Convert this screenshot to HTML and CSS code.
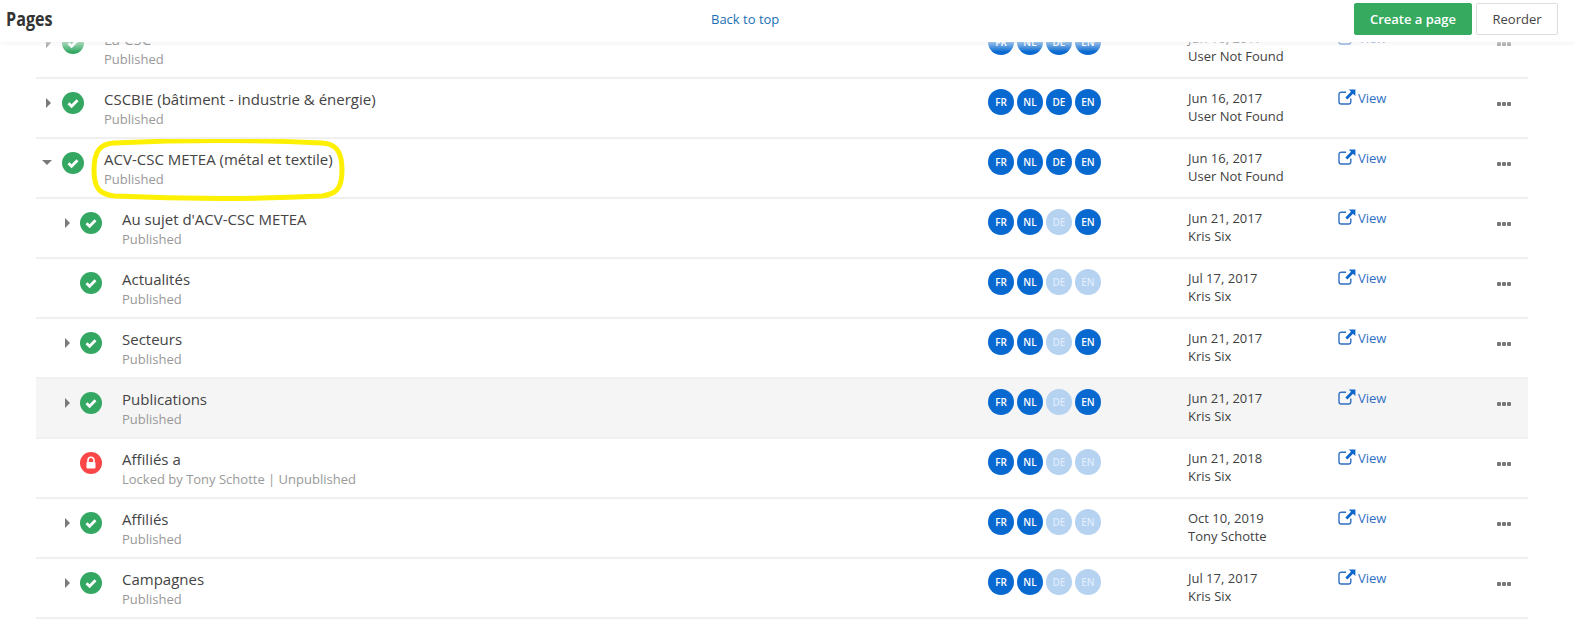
FILE: index.html
```html
<!DOCTYPE html>
<html lang="en">
<head>
<meta charset="utf-8">
<title>Pages</title>
<link rel="stylesheet" href="styles.css">
</head>
<body>
<svg class="defs" width="0" height="0" aria-hidden="true">
  <defs>
    <symbol id="ext" viewBox="0 0 18 16">
      <path d="M8 3.2H3.2A2.2 2.2 0 0 0 1 5.4v7.4A2.2 2.2 0 0 0 3.2 15h7.4a2.2 2.2 0 0 0 2.2-2.2V9.6" fill="none" stroke="#2f6fc4" stroke-width="1.4"/>
      <path d="M10.8 0.4H17.4V7L15 4.8 9.4 10.4 7.4 8.4 13 2.8Z" fill="#0e66c9"/>
    </symbol>
  </defs>
</svg>
<header class="topbar">
  <h1 class="topbar-title">Pages</h1>
  <a class="back-link">Back to top</a>
  <div class="topbar-actions">
    <button class="btn btn-primary">Create a page</button>
    <button class="btn btn-plain">Reorder</button>
  </div>
</header>
<main class="list">
  <div class="row">
    <span class="caret right"></span><span class="status ok"><svg viewBox="0 0 22 22"><path d="M6.5 11.3l3.1 3 5.9-6" fill="none" stroke="#fff" stroke-width="2.8"/></svg></span>
    <div class="name"><div class="title">La CSC</div><div class="sub">Published</div></div>
    <div class="langs"><span class="lang">FR</span><span class="lang">NL</span><span class="lang">DE</span><span class="lang">EN</span></div>
    <div class="meta"><div>Jun 16, 2017</div><div>User Not Found</div></div>
    <a class="view"><svg class="ext"><use href="#ext"/></svg>View</a>
    <div class="more"><i></i><i></i><i></i></div>
  </div>
  <div class="row">
    <span class="caret right"></span><span class="status ok"><svg viewBox="0 0 22 22"><path d="M6.5 11.3l3.1 3 5.9-6" fill="none" stroke="#fff" stroke-width="2.8"/></svg></span>
    <div class="name"><div class="title">CSCBIE (bâtiment - industrie &amp; énergie)</div><div class="sub">Published</div></div>
    <div class="langs"><span class="lang">FR</span><span class="lang">NL</span><span class="lang">DE</span><span class="lang">EN</span></div>
    <div class="meta"><div>Jun 16, 2017</div><div>User Not Found</div></div>
    <a class="view"><svg class="ext"><use href="#ext"/></svg>View</a>
    <div class="more"><i></i><i></i><i></i></div>
  </div>
  <div class="row">
    <span class="caret down"></span><span class="status ok"><svg viewBox="0 0 22 22"><path d="M6.5 11.3l3.1 3 5.9-6" fill="none" stroke="#fff" stroke-width="2.8"/></svg></span>
    <div class="name"><div class="title">ACV-CSC METEA (métal et textile)</div><div class="sub">Published</div>
      <svg class="marker" viewBox="0 0 256 62"><path d="M24 4C90 1 170 1 232 4C246 5 252 12 252 31C252 50 246 55 232 57C170 60 90 60 24 57C10 55 4 50 4 31C4 12 10 5 24 4Z" fill="none" stroke="#fdf003" stroke-width="5"/></svg>
    </div>
    <div class="langs"><span class="lang">FR</span><span class="lang">NL</span><span class="lang">DE</span><span class="lang">EN</span></div>
    <div class="meta"><div>Jun 16, 2017</div><div>User Not Found</div></div>
    <a class="view"><svg class="ext"><use href="#ext"/></svg>View</a>
    <div class="more"><i></i><i></i><i></i></div>
  </div>
  <div class="row nested">
    <span class="caret right"></span><span class="status ok"><svg viewBox="0 0 22 22"><path d="M6.5 11.3l3.1 3 5.9-6" fill="none" stroke="#fff" stroke-width="2.8"/></svg></span>
    <div class="name"><div class="title">Au sujet d'ACV-CSC METEA</div><div class="sub">Published</div></div>
    <div class="langs"><span class="lang">FR</span><span class="lang">NL</span><span class="lang off">DE</span><span class="lang">EN</span></div>
    <div class="meta"><div>Jun 21, 2017</div><div>Kris Six</div></div>
    <a class="view"><svg class="ext"><use href="#ext"/></svg>View</a>
    <div class="more"><i></i><i></i><i></i></div>
  </div>
  <div class="row nested">
    <span class="caret none"></span><span class="status ok"><svg viewBox="0 0 22 22"><path d="M6.5 11.3l3.1 3 5.9-6" fill="none" stroke="#fff" stroke-width="2.8"/></svg></span>
    <div class="name"><div class="title">Actualités</div><div class="sub">Published</div></div>
    <div class="langs"><span class="lang">FR</span><span class="lang">NL</span><span class="lang off">DE</span><span class="lang off">EN</span></div>
    <div class="meta"><div>Jul 17, 2017</div><div>Kris Six</div></div>
    <a class="view"><svg class="ext"><use href="#ext"/></svg>View</a>
    <div class="more"><i></i><i></i><i></i></div>
  </div>
  <div class="row nested">
    <span class="caret right"></span><span class="status ok"><svg viewBox="0 0 22 22"><path d="M6.5 11.3l3.1 3 5.9-6" fill="none" stroke="#fff" stroke-width="2.8"/></svg></span>
    <div class="name"><div class="title">Secteurs</div><div class="sub">Published</div></div>
    <div class="langs"><span class="lang">FR</span><span class="lang">NL</span><span class="lang off">DE</span><span class="lang">EN</span></div>
    <div class="meta"><div>Jun 21, 2017</div><div>Kris Six</div></div>
    <a class="view"><svg class="ext"><use href="#ext"/></svg>View</a>
    <div class="more"><i></i><i></i><i></i></div>
  </div>
  <div class="row nested hover">
    <span class="caret right"></span><span class="status ok"><svg viewBox="0 0 22 22"><path d="M6.5 11.3l3.1 3 5.9-6" fill="none" stroke="#fff" stroke-width="2.8"/></svg></span>
    <div class="name"><div class="title">Publications</div><div class="sub">Published</div></div>
    <div class="langs"><span class="lang">FR</span><span class="lang">NL</span><span class="lang off">DE</span><span class="lang">EN</span></div>
    <div class="meta"><div>Jun 21, 2017</div><div>Kris Six</div></div>
    <a class="view"><svg class="ext"><use href="#ext"/></svg>View</a>
    <div class="more"><i></i><i></i><i></i></div>
  </div>
  <div class="row nested">
    <span class="caret none"></span><span class="status locked"><svg viewBox="0 0 22 22"><path d="M8 10V8.2a3 3 0 0 1 6 0V10" fill="none" stroke="#fff" stroke-width="1.6"/><rect x="6.5" y="10" width="9" height="6.5" rx="1" fill="#fff"/></svg></span>
    <div class="name"><div class="title">Affiliés a</div><div class="sub">Locked by Tony Schotte | Unpublished</div></div>
    <div class="langs"><span class="lang">FR</span><span class="lang">NL</span><span class="lang off">DE</span><span class="lang off">EN</span></div>
    <div class="meta"><div>Jun 21, 2018</div><div>Kris Six</div></div>
    <a class="view"><svg class="ext"><use href="#ext"/></svg>View</a>
    <div class="more"><i></i><i></i><i></i></div>
  </div>
  <div class="row nested">
    <span class="caret right"></span><span class="status ok"><svg viewBox="0 0 22 22"><path d="M6.5 11.3l3.1 3 5.9-6" fill="none" stroke="#fff" stroke-width="2.8"/></svg></span>
    <div class="name"><div class="title">Affiliés</div><div class="sub">Published</div></div>
    <div class="langs"><span class="lang">FR</span><span class="lang">NL</span><span class="lang off">DE</span><span class="lang off">EN</span></div>
    <div class="meta"><div>Oct 10, 2019</div><div>Tony Schotte</div></div>
    <a class="view"><svg class="ext"><use href="#ext"/></svg>View</a>
    <div class="more"><i></i><i></i><i></i></div>
  </div>
  <div class="row nested">
    <span class="caret right"></span><span class="status ok"><svg viewBox="0 0 22 22"><path d="M6.5 11.3l3.1 3 5.9-6" fill="none" stroke="#fff" stroke-width="2.8"/></svg></span>
    <div class="name"><div class="title">Campagnes</div><div class="sub">Published</div></div>
    <div class="langs"><span class="lang">FR</span><span class="lang">NL</span><span class="lang off">DE</span><span class="lang off">EN</span></div>
    <div class="meta"><div>Jul 17, 2017</div><div>Kris Six</div></div>
    <a class="view"><svg class="ext"><use href="#ext"/></svg>View</a>
    <div class="more"><i></i><i></i><i></i></div>
  </div>
</main>
</body>
</html>
```
FILE: styles.css
```css
* { box-sizing: border-box; }
html, body { height: 100%; }
body {
  margin: 0;
  overflow: hidden;
  background: #fff;
  color: #333;
  font-family: "Open Sans", "Noto Sans", sans-serif;
  font-size: 13px;
}
.defs { position: absolute; }

.topbar {
  position: absolute;
  z-index: 5;
  top: 0;
  left: 0;
  right: 0;
  height: 42px;
  background: #fff;
  box-shadow: 0 1px 4px rgba(0, 0, 0, .12);
  display: grid;
  grid-template-columns: 705px auto 1fr;
  align-items: center;
  padding: 0 17px 4px 6px;
}
.topbar::after {
  content: "";
  position: absolute;
  left: 0;
  right: 0;
  top: 42px;
  height: 10px;
  background: linear-gradient(rgba(255, 255, 255, .6), rgba(255, 255, 255, 0));
}
.topbar-title {
  margin: 0;
  font-size: 19px;
  font-weight: 700;
  color: #333;
  transform-origin: left center;
  transform: scaleX(.85);
}
.back-link { color: #1a6fb5; font-size: 13px; }
.topbar-actions { display: flex; justify-content: flex-end; gap: 4px; }
.btn {
  height: 32px;
  border-radius: 2px;
  font-family: inherit;
  font-size: 13px;
  padding: 0;
  cursor: pointer;
}
.btn-primary { width: 118px; background: #36ab60; border: 1px solid #36ab60; color: #fff; font-weight: 600; }
.btn-plain { width: 82px; background: #fff; border: 1px solid #ddd; color: #444; }

.list { padding: 19px 47px 0 36px; }
.row {
  height: 60px;
  position: relative;
  display: grid;
  grid-template-columns: 26px 26px 1fr 200px 150px 150px 40px;
  border-bottom: 2px solid #f0f0f0;
}
.row.nested { grid-template-columns: 44px 26px 1fr 200px 150px 150px 40px; }
.row.hover { background: #f5f5f5; }

.caret { justify-self: end; margin: 19px 11px 0 0; width: 0; height: 0; }
.row.nested .caret { margin-right: 10px; }
.caret.right { border-left: 5px solid #7a7a7a; border-top: 5px solid transparent; border-bottom: 5px solid transparent; }
.caret.down { border-top: 5px solid #7a7a7a; border-left: 5px solid transparent; border-right: 5px solid transparent; margin: 21px 10px 0 0; }
.status { width: 22px; height: 22px; border-radius: 50%; margin-top: 13px; display: block; }
.status svg { display: block; width: 22px; height: 22px; }
.status.ok { background: #34a862; }
.status.locked { background: #fa4646; }

.name { position: relative; padding: 10px 0 0 16px; }
.title { font-size: 15px; line-height: 20px; color: #444; }
.sub { font-size: 13px; line-height: 18px; color: #999; margin-top: 1px; }
.marker { position: absolute; left: 2px; top: 0; width: 256px; height: 62px; }

.langs { display: flex; gap: 3px; padding-top: 10px; }
.lang {
  width: 26px;
  height: 26px;
  border-radius: 50%;
  background: #0869d1;
  color: #fff;
  font-size: 10px;
  font-weight: 600;
  display: flex;
  align-items: center;
  justify-content: center;
}
.lang.off { background: #b5d2f1; color: #dfecfa; }

.meta { padding-top: 10px; line-height: 18px; font-size: 13px; color: #3f3f3f; }
.view { color: #2f6fc4; font-size: 13px; line-height: 18px; padding-top: 10px; display: flex; align-items: flex-start; }
.ext { width: 18px; height: 16px; margin: 0 2px 0 0; flex: none; }
.more { display: flex; gap: 1px; padding: 23px 0 0 9px; }
.more i { width: 4px; height: 4px; background: #777; display: block; border-radius: 1px; }
```
